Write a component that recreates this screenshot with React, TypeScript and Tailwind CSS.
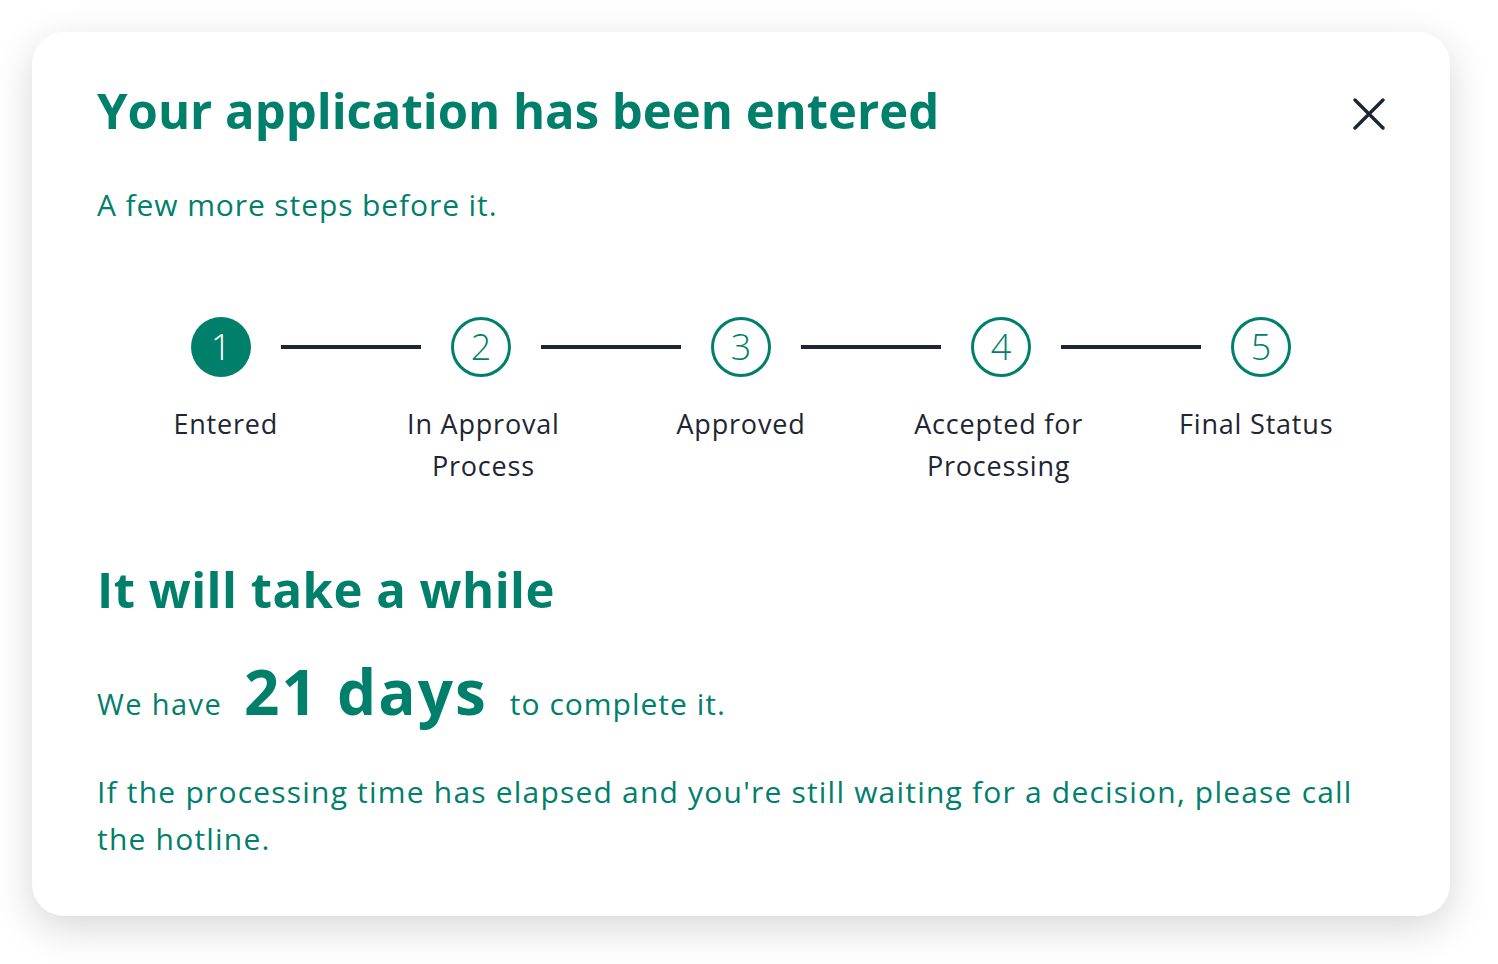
const STEPS = [
	{ n: 1, label: ['Entered'] },
	{ n: 2, label: ['In Approval', 'Process'] },
	{ n: 3, label: ['Approved'] },
	{ n: 4, label: ['Accepted for', 'Processing'] },
	{ n: 5, label: ['Final Status'] },
];

const CURRENT = 1;

function StepCircle({ n }: { n: number }) {
	const done = n <= CURRENT;
	return (
		<div
			className={
				done
					? 'flex h-[60px] w-[60px] shrink-0 items-center justify-center rounded-full bg-[#00806b] text-[36px] leading-none font-light text-white'
					: 'flex h-[60px] w-[60px] shrink-0 items-center justify-center rounded-full border-[3px] border-[#00806b] text-[36px] leading-none font-light text-[#00806b]'
			}
		>
			{n}
		</div>
	);
}

function CloseIcon() {
	return (
		<svg width="32" height="32" viewBox="0 0 32 32" fill="none" stroke="currentColor" strokeWidth="3.4" strokeLinecap="round">
			<path d="M2 2L30 30M30 2L2 30" />
		</svg>
	);
}

export default function App() {
	return (
		<div className="min-h-screen bg-white pt-8 pl-8 font-['Open_Sans',sans-serif]">
			<div className="h-[884px] w-[1418px] rounded-[32px] bg-white px-[65px] pt-[47px] shadow-[0_12px_40px_rgba(0,0,0,0.16)]">
				<div className="flex items-start justify-between">
					<h1 className="text-[49px] leading-[1.3] font-bold text-[#00806b]">Your application has been entered</h1>
					<button className="mt-[19px] text-[#1e2533]">
						<CloseIcon />
					</button>
				</div>
				<p className="mt-[42px] text-[30px] leading-[1.3] tracking-[0.9px] text-[#00806b]">A few more steps before it.</p>

				{/* progress track */}
				<div className="mt-[93px] flex items-center justify-center gap-[30px]">
					{STEPS.map((s, i) => (
						<div key={s.n} className="flex items-center gap-[30px]">
							<StepCircle n={s.n} />
							{i < STEPS.length - 1 && <div className="h-[4px] w-[140px] bg-[#1e2533]" />}
						</div>
					))}
				</div>
				<div className="mt-[26px] grid grid-cols-5 text-center text-[27px] leading-[42px] tracking-[0.8px] text-[#1e2533]">
					{STEPS.map((s) => (
						<div key={s.n}>
							{s.label.map((l) => (
								<div key={l}>{l}</div>
							))}
						</div>
					))}
				</div>

				<h2 className="mt-[71px] text-[49px] leading-[1.3] font-bold tracking-[0.5px] text-[#00806b]">It will take a while</h2>
				<div className="mt-[39px] flex items-baseline gap-[22px] text-[#00806b]">
					<span className="text-[29px] tracking-[1.4px]">We have</span>
					<span className="text-[62px] leading-none font-bold tracking-[2px]">21 days</span>
					<span className="text-[30px] tracking-[1px]">to complete it.</span>
				</div>
				<p className="mt-[42px] text-[30px] leading-[47px] tracking-[1.2px] text-[#00806b]">
					If the processing time has elapsed and you're still waiting for a decision, please call the hotline.
				</p>
			</div>
		</div>
	);
}
